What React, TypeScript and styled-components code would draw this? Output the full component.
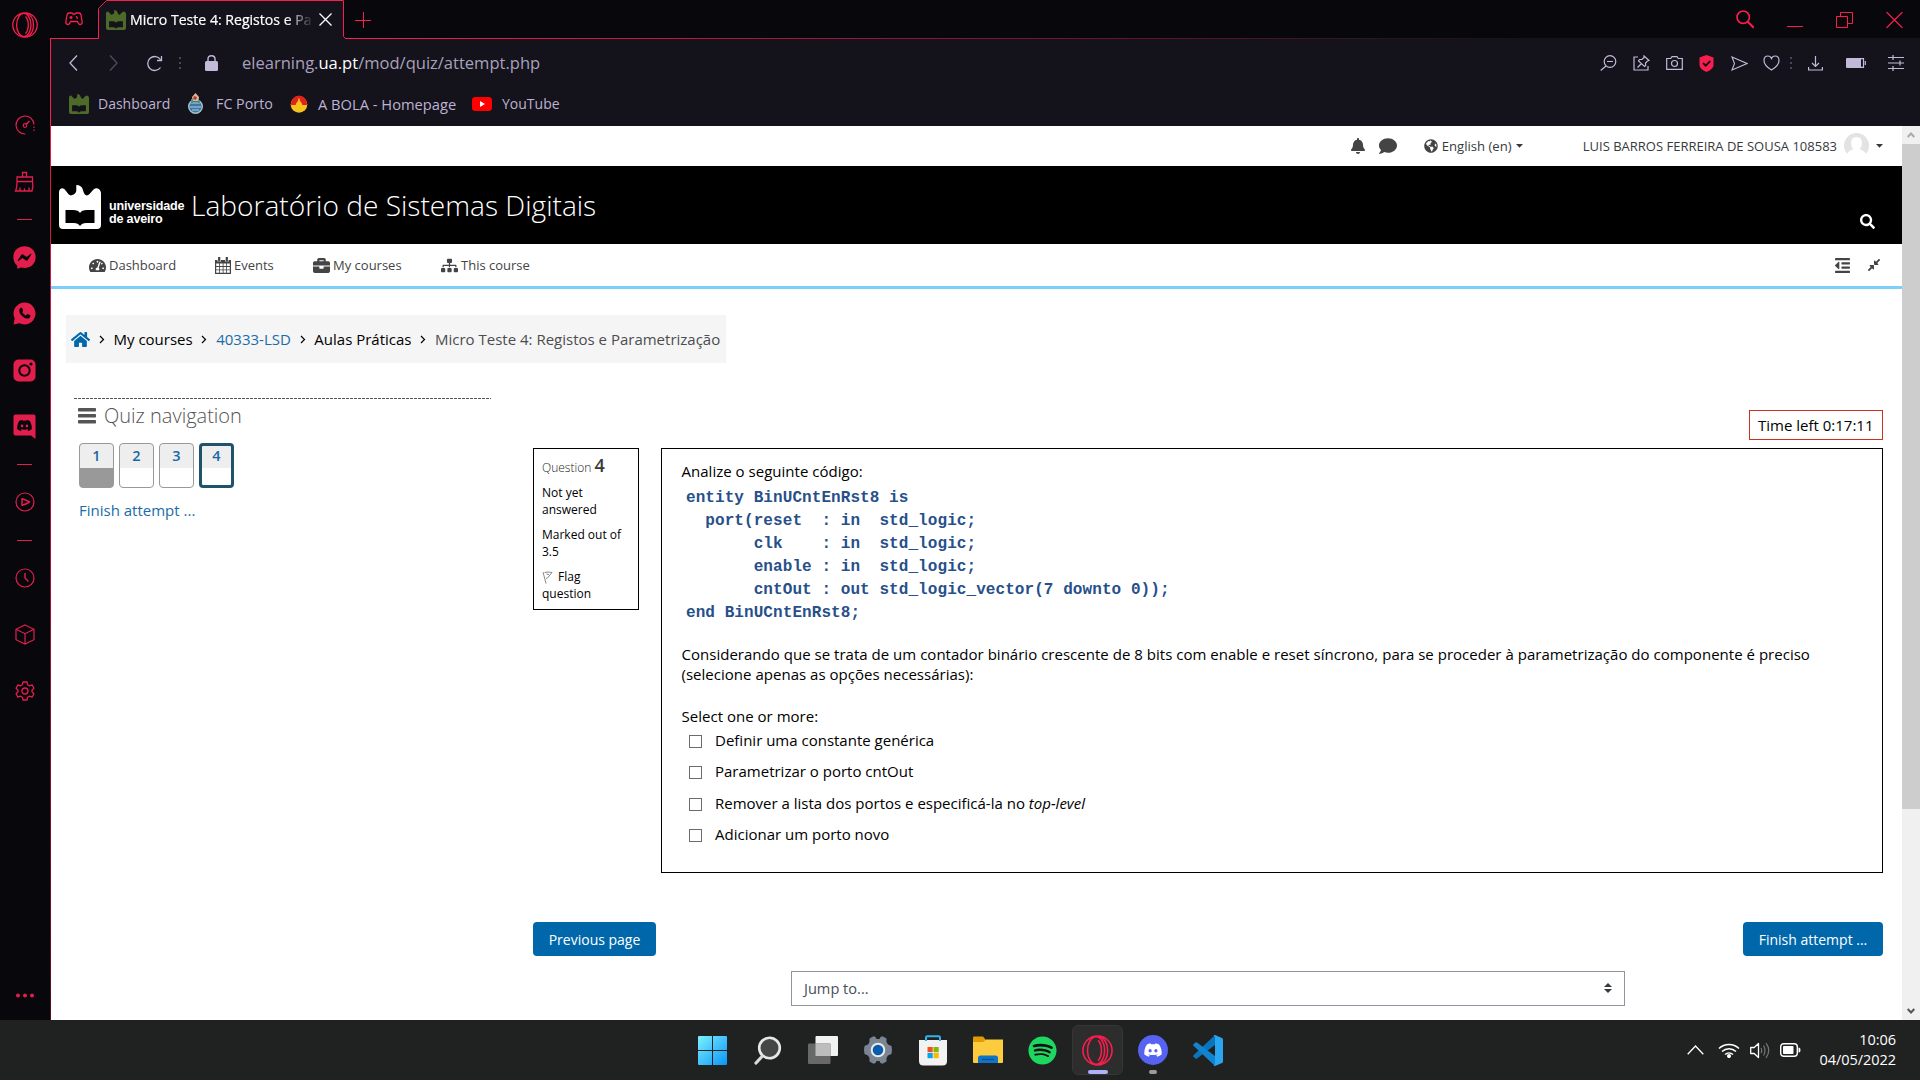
import React from 'react';
import styled, { createGlobalStyle } from 'styled-components';
import {
  FaBell, FaComment, FaGlobeAmericas, FaSearch, FaTachometerAlt, FaBriefcase, FaSitemap,
  FaOutdent, FaCompressAlt, FaHome, FaDiscord, FaSpotify, FaFacebookMessenger,
} from 'react-icons/fa';

const RED = '#fa1e4e';
const SIDE = '#e21e4c';
const LILAC = '#c3b9d8';

const Global = createGlobalStyle`
  * { box-sizing: border-box; }
  html, body { margin: 0; padding: 0; overflow: hidden; background: #fff; }
  body { font-family: "Open Sans", "Noto Sans", sans-serif; font-size: 15px; color: #000; }
  svg { display: block; flex: none; }
`;

const Screen = styled.div`
  width: 1920px; height: 1080px; display: flex; flex-direction: column; overflow: hidden;
`;
const Browser = styled.div`display: flex; height: 1020px; background: #08070c;`;

/* ---------- side bar ---------- */
const SideBar = styled.nav`
  width: 50px; height: 1020px; display: flex; flex-direction: column; align-items: center; background: #08070c; color: ${SIDE};
`;
const Slot = styled.div<{ $h: number }>`
  height: ${p => p.$h}px; width: 50px; flex: none; display: flex; align-items: center; justify-content: center; padding-right: 1px;
`;
const Dash = styled.i`width: 15px; height: 1px; background: ${SIDE};`;
const Grow = styled.div`flex: 1;`;

const Window = styled.div`width: 1870px; display: flex; flex-direction: column;`;

/* ---------- tab strip ---------- */
const TabStrip = styled.header`height: 39px; display: flex; align-items: flex-start; color: ${RED};`;
const TabLead = styled.div`
  width: 48px; height: 39px; display: flex; align-items: center; justify-content: center; border-bottom: 1px solid ${RED};
`;
const Tab = styled.div`
  position: relative; width: 247px; height: 39px; display: flex; align-items: center; padding: 0 13px 0 8px;
`;
const TabFrame = styled.svg`position: absolute; left: 0; top: 0;`;
const TabTitle = styled.div`
  position: relative; margin-left: 4px; width: 182px; height: 22px; overflow: hidden; white-space: nowrap;
  font-size: 14.1px; line-height: 22px; color: #fff;
  -webkit-text-stroke: 0.2px #fff;
  -webkit-mask-image: linear-gradient(90deg, #000 156px, transparent 184px);
  mask-image: linear-gradient(90deg, #000 156px, transparent 184px);
`;
const TabIcon = styled.div`position: relative;`;
const TabClose = styled.div`position: relative; margin-left: auto;`;
const TabRest = styled.div`
  flex: 1; height: 39px; display: flex; align-items: center; padding: 0 17px 0 10px;
  background: linear-gradient(90deg, ${RED}, #a31638 30%, #14121b 75%) 0 38px / 100% 1px no-repeat;
`;
const WindowControls = styled.div`margin-left: auto; display: flex; gap: 33px; align-items: center;`;

/* ---------- tool bar ---------- */
const ToolBar = styled.div`
  height: 48px; display: flex; align-items: center; background: #14121b; color: ${LILAC}; border-left: 1px solid ${RED};
`;
const Tool = styled.div<{ $w: number; $dim?: boolean }>`
  width: ${p => p.$w}px; display: flex; justify-content: center; opacity: ${p => (p.$dim ? 0.35 : 1)};
`;
const Address = styled.div`
  font-size: 16.55px; line-height: 24px; color: #a9a1bc; margin-left: 3px; flex: 1;
  b { font-weight: 400; color: #fff; }
`;
const Bookmarks = styled.div`
  height: 39px; display: flex; align-items: center; background: #14121b; border-left: 1px solid ${RED};
  padding: 0 0 6px 18px;
`;
const Bookmark = styled.div<{ $w: number; $gap: number; $size?: number }>`
  width: ${p => p.$w}px; display: flex; align-items: center; gap: ${p => p.$gap}px; white-space: nowrap;
  font-size: ${p => p.$size ?? 14}px; line-height: 20px; color: #bdb3d2;
`;

/* ---------- page ---------- */
const View = styled.div`
  height: 894px; display: flex;
  &::before { content: ''; width: 1px; background: linear-gradient(#e01c46, #8a1231 70%, #5c0d22); }
`;
const Page = styled.main`width: 1851px; background: #fff; display: flex; flex-direction: column;`;
const ScrollTrack = styled.div`
  width: 18px; background: #f0f0f0; display: flex; flex-direction: column; align-items: center;
`;
const ScrollArrow = styled.div`height: 18px; display: flex; align-items: center;`;
const ScrollThumb = styled.div`width: 18px; height: 665px; background: #cdcdcd;`;

const UserBar = styled.div`
  height: 40px; display: flex; align-items: center; justify-content: flex-end; padding: 0 19px 1px 0;
  font-size: 13px; line-height: 20px; color: #373a3c;
`;
const UserTools = styled.div`display: flex; align-items: center; gap: 13px; margin-right: 27px; color: #444;`;
const Lang = styled.div`display: flex; align-items: center; gap: 4px; margin-right: 59px; width: 100px; font-size: 13.1px;`;
const UserName = styled.div`display: flex; align-items: center; gap: 7px; white-space: nowrap;`;

const Banner = styled.div`
  height: 78px; background: #000; color: #fff; display: flex; padding-left: 8px;
`;
const LogoMark = styled.div`padding-top: 19px;`;
const LogoText = styled.div`
  margin: 34px 0 0 8px; width: 77px; font: 700 12.6px/13px "Liberation Sans", Arial, sans-serif; letter-spacing: -0.2px;
`;
const CourseTitle = styled.h1`
  margin: 20px 0 0 5px; font-weight: 300; font-size: 28.1px; line-height: 38px; white-space: nowrap;
`;
const BannerSearch = styled.div`margin: 48px 27px 0 auto;`;

const NavBar = styled.div`
  height: 45px; display: flex; align-items: center; padding: 0 21px 0 38px; border-bottom: 3px solid #7bcffd; color: #444;
  font-size: 13px;
`;
const NavItem = styled.div<{ $w: number }>`
  width: ${p => p.$w}px; display: flex; align-items: center; gap: 3px; white-space: nowrap; line-height: 20px;
`;
const NavTools = styled.div`margin-left: auto; display: flex; align-items: center; gap: 16px;`;

const Crumbs = styled.div`
  margin: 26px 0 0 15px; width: 660px; height: 48px; background: #f5f5f5; display: flex; align-items: center;
  padding: 0 0 0 5px; color: #000; white-space: nowrap;
`;
const Crumb = styled.span<{ $tone?: 'link' | 'muted' }>`
  color: ${p => (p.$tone === 'link' ? '#1a6ba8' : p.$tone === 'muted' ? '#4c4d4f' : '#000')};
`;
const Chevron = styled.span`
  width: 23.5px; display: flex; justify-content: center; padding-top: 1px;
`;

const Columns = styled.div`display: grid; grid-template-columns: 417px 1350px; column-gap: 42px; margin: 35px 0 0 23px;`;
const NavBlock = styled.aside`
  background: repeating-linear-gradient(90deg, #555 0 3px, #fff 3px 4px) 0 0 / 100% 1px no-repeat;
`;
const BlockTitle = styled.h2`
  margin: 5px 0 0 4px; height: 26px; display: flex; align-items: center; gap: 8px;
  font-weight: 300; font-size: 20px; line-height: 26px; color: #555;
`;
const Numbers = styled.div`display: flex; gap: 5px; margin: 14px 0 0 5px;`;
const NumberBtn = styled.div<{ $done?: boolean; $current?: boolean }>`
  width: 35px; height: 45px; overflow: hidden; border-radius: 4px; text-align: center;
  border: ${p => (p.$current ? '3px solid #1f536b' : '1px solid #999')};
  background: linear-gradient(#eee 0 0) top / 100% ${p => (p.$current ? 22 : 24)}px no-repeat ${p => (p.$done ? '#999' : '#fff')};
  color: #1668a6; font-weight: 600; font-size: 14.5px; line-height: 20px; padding-top: ${p => (p.$current ? 0 : 2)}px;
`;
const FinishLink = styled.a`display: block; margin: 12px 0 0 5px; line-height: 20px; color: #1a6ba8;`;

const Main = styled.section`padding-top: 12px;`;
const TimerRow = styled.div`display: flex; justify-content: flex-end;`;
const Timer = styled.div`
  width: 134px; height: 30px; border: 1px solid #ca3120; padding-left: 8px; line-height: 28px;
`;
const Question = styled.div`display: flex; gap: 22px; margin-top: 8px; align-items: flex-start;`;
const Info = styled.div`
  width: 106px; height: 162px; border: 1px solid #000; padding: 4px 0 0 8px; font-size: 12px; line-height: 17px; letter-spacing: 0;
`;
const InfoNo = styled.div`
  height: 23px; line-height: 24px; font-weight: 300; color: #222; white-space: nowrap;
  b { font-weight: 600; font-size: 18px; color: #373a3c; }
`;
const InfoPara = styled.div`margin-top: 8px; & + & { margin-top: 8px; }`;
const Flag = styled.div`
  margin-top: 8px; svg { display: inline-block; vertical-align: -3px; margin-right: 5px; }
`;
const Body = styled.div`width: 1222px; height: 425px; border: 1px solid #000; padding: 12px 20px 0;`;
const Para = styled.p<{ $top?: number }>`margin: ${p => p.$top ?? 0}px 0 0 -0.5px; line-height: 20px; letter-spacing: 0.02px;`;
const Code = styled.pre`
  margin: 6px 0 0 4px; font: 700 16px/23px "Liberation Mono", "Courier New", monospace; letter-spacing: 0.07px; color: #27508a;
`;
const Answers = styled.div`display: flex; flex-direction: column; padding-left: 7px; margin-top: 1px;`;
const Answer = styled.label`
  display: flex; align-items: center; height: 31.3px; gap: 13px; padding-bottom: 5px; line-height: 20px;
`;
const Box = styled.i`width: 13px; height: 13px; border: 1px solid #6b6b6b; background: #fff; margin-top: 3px;`;
const Actions = styled.div`display: flex; justify-content: space-between; margin-top: 49px;`;
const Button = styled.button<{ $w: number }>`
  width: ${p => p.$w}px; height: 34px; border: 0; border-radius: 4px; background: #0068aa; color: #fff; padding: 1px 0 0;
  font: 14px/20px "Open Sans", sans-serif;
`;
const Jump = styled.div`
  width: 834px; height: 35px; margin: 15px 0 0 258px; border: 1px solid #8f959e; display: flex; align-items: center;
  justify-content: space-between; padding: 0 12px 1px 12px; color: #495057; font-size: 14.6px;
`;

/* ---------- task bar ---------- */
const TaskBar = styled.footer`
  height: 60px; background: #202121; display: grid; grid-template-columns: 685px 550px 1fr; color: #fff;
`;
const Apps = styled.div`grid-column: 2; display: flex;`;
const Launcher = styled.div<{ $active?: boolean }>`
  position: relative; width: 51px; height: 50px; margin: 5px 2px; border-radius: 6px; display: flex; align-items: center; justify-content: center;
  background: ${p => (p.$active ? '#2d2d2d' : 'none')}; border: 1px solid ${p => (p.$active ? '#363636' : 'transparent')};
`;
const Running = styled.i<{ $wide?: boolean }>`
  position: absolute; bottom: 0; left: 50%; transform: translateX(-50%); border-radius: 2px; height: 4px;
  width: ${p => (p.$wide ? 20 : 8)}px; background: ${p => (p.$wide ? '#abb3f5' : '#9c9c9c')};
`;
const Tray = styled.div`display: flex; align-items: center; justify-content: flex-end; padding-right: 24px;`;
const TrayIcons = styled.div`display: flex; align-items: center; gap: 10px; margin-right: 19px;`;
const Clock = styled.div`text-align: right; font-size: 14.5px; line-height: 20px; padding-bottom: 1px; letter-spacing: -0.05px;`;

/* ---------- drawings ---------- */
const Castle = ({ w, h, color, hole }: { w: number; h: number; color: string; hole: string }) => (
  <svg width={w} height={h} viewBox="0 0 42 44" preserveAspectRatio="none">
    <path fill={color} d="M0 7Q.5 3.300 3.500 3.300Q5.500 3.300 7 6L9.500 9.300Q11 10.700 12.500 10.300Q17.500 9 17.300 5V0Q22.500 0 23.800 4.500Q25 9.500 27.200 10.300Q29 10.800 30.500 9L34.500 4.500Q36 3.200 37.700 3.200Q41.500 4 42 8V40Q42 44 38 44H4Q0 44 0 40Z" />
    <path fill={hole} d="M6.500 25H14Q19.500 25 21 28Q22.500 25 28 25H35.500V38H27Q23 38 21 41Q19 38 15 38H6.500Z" />
  </svg>
);
const line = { fill: 'none', stroke: 'currentColor' } as const;
const OperaGX = ({ s, color, sw = 1.3 }: { s: number; color: string; sw?: number }) => (
  <svg width={s} height={s} viewBox="0 0 26 26" fill="none" stroke={color} strokeWidth={sw}>
    <circle cx="13" cy="13" r="12.200" />
    <ellipse cx="11.800" cy="13" rx="7.200" ry="11.600" />
    <path d="M14.500 1Q21.500 4 21.500 13T14.500 25M13.500 4.500Q16.300 7.500 16.300 13T13.500 21.500" />
  </svg>
);
const Chev = () => (
  <svg width="6" height="9" viewBox="0 0 6 9" {...line} strokeWidth="1.200"><path d="M1 1l3.500 3.500L1 8" /></svg>
);
const Caret = () => (
  <svg width="7" height="4" viewBox="0 0 7 4" fill="#373a3c"><path d="M0 0h7L3.500 3.700z" /></svg>
);
const Dots = () => (
  <svg width="2" height="14" viewBox="0 0 2 14" fill="#4a4656"><path d="M0 1h2v2H0zM0 6h2v2H0zM0 11h2v2H0z" /></svg>
);

const answers: React.ReactNode[] = [
  'Definir uma constante genérica',
  'Parametrizar o porto cntOut',
  <span key="t">Remover a lista dos portos e especificá-la no <i>top-level</i></span>,
  'Adicionar um porto novo',
];

const code = `entity BinUCntEnRst8 is
  port(reset  : in  std_logic;
       clk    : in  std_logic;
       enable : in  std_logic;
       cntOut : out std_logic_vector(7 downto 0));
end BinUCntEnRst8;`;

const Side = () => (
  <SideBar>
    <Slot $h={50}><OperaGX s={26} color={RED} /></Slot>
    <Slot $h={46} />
    <Slot $h={57}>
      <svg width="20" height="20" viewBox="0 0 20 20" {...line} strokeWidth="1.200">
        <path d="M10.500 19A9 9 0 1 1 19 9.500" /><circle cx="10" cy="10.500" r="1.800" /><path d="M11.300 9.200L14.500 6" strokeWidth="1.600" />
        <path d="M19 11.500v5.500" strokeDasharray="1.500 1.500" />
      </svg>
    </Slot>
    <Slot $h={56}>
      <svg width="21" height="21" viewBox="0 0 21 21" {...line} strokeWidth="1.300">
        <path d="M3 6h15.500v4.500H3zM8.500 6V1.500h4V6M3 10.500Q3 17 1.500 20H18Q19.500 16 18.500 10.500M6 20v-3.500M10.500 20v-2.500M15 20v-3.500" />
      </svg>
    </Slot>
    <Slot $h={20}><Dash /></Slot>
    <Slot $h={56.5}><FaFacebookMessenger size={23} /></Slot>
    <Slot $h={56.5}>
      <svg width="23" height="23" viewBox="0 0 23 23">
        <path fill={SIDE} d="M11.500.5a11 11 0 1 1-5 20.800L.5 22.500 1.700 16.500A11 11 0 0 1 11.500.5Z" />
        <path fill="#08070c" d="M7.500 6c1-.6 1.600-.3 2 .8.600 1.600.8 1.800.2 2.600-.5.600-.6.700.3 1.900 1 1.200 1.700 1.700 2.700 2.100.7.300 1.200-1.200 1.800-1.300.6 0 2.300.9 2.800 1.200.5.500-.2 2.300-1.200 2.900-2 1-4.500 0-6.700-1.900C6.700 11.900 5 8 7.500 6Z" />
      </svg>
    </Slot>
    <Slot $h={56.5}>
      <svg width="23" height="23" viewBox="0 0 23 23">
        <rect x=".5" y=".5" width="22" height="22" rx="5" fill={SIDE} />
        <circle cx="11.500" cy="11.500" r="5.200" fill="none" stroke="#08070c" strokeWidth="2" /><circle cx="18" cy="5" r="1.600" fill="#08070c" />
      </svg>
    </Slot>
    <Slot $h={56.5}>
      <svg width="23" height="25" viewBox="0 0 23 25">
        <path fill={SIDE} d="M2.500.5h18q2 0 2 2V25L18 21.500H2.500q-2 0-2-2v-17q0-2 2-2Z" />
        <FaDiscord x="3.500" y="3.500" size={16} color="#08070c" />
      </svg>
    </Slot>
    <Slot $h={18}><Dash /></Slot>
    <Slot $h={57}>
      <svg width="20" height="20" viewBox="0 0 20 20" {...line} strokeWidth="1.200"><circle cx="10" cy="10" r="9" /><path strokeWidth="1.500" strokeLinejoin="round" d="M7 6.700v6.600q3.500-.7 7.500-3.300Q10.500 7.400 7 6.700Z" /></svg>
    </Slot>
    <Slot $h={20}><Dash /></Slot>
    <Slot $h={56.5}>
      <svg width="20" height="20" viewBox="0 0 20 20" {...line} strokeWidth="1.200"><circle cx="10" cy="10" r="9" /><path d="M10 5v5l3.500 3.500" strokeWidth="1.400" /></svg>
    </Slot>
    <Slot $h={56.5}>
      <svg width="20" height="21" viewBox="0 0 20 21" {...line} strokeWidth="1.200"><path d="M10 1l9 4.300v10.400L10 20l-9-4.300V5.300zM1 5.300l9 4.400 9-4.400M10 9.700V20" /></svg>
    </Slot>
    <Slot $h={56.5}>
      <svg width="20" height="20" viewBox="0 0 20 20" {...line} strokeWidth="1.300" strokeLinejoin="round">
        <path d="M8 1h4l.6 2.800 1.700 1L17.200 4l1.700 3.300L17 9.200v1.600l1.900 1.900-1.700 3.300-2.900-.8-1.700 1L12 19H8l-.6-2.800-1.700-1-2.900.8-1.700-3.300L3 10.800V9.200L1.100 7.300 2.800 4l2.900.8 1.700-1Z" /><circle cx="10" cy="10" r="3" />
      </svg>
    </Slot>
    <Grow />
    <Slot $h={50}><svg width="18" height="5" viewBox="0 0 18 5" fill={SIDE}><circle cx="2" cy="2.500" r="2" /><circle cx="9" cy="2.500" r="2" /><circle cx="16" cy="2.500" r="2" /></svg></Slot>
  </SideBar>
);

const Tabs = () => (
  <TabStrip>
    <TabLead>
      <svg width="18" height="14" viewBox="0 0 18 14" {...line} strokeWidth="1.300">
        <path strokeLinejoin="round" d="M4 1h3l1 1h2l1-1h3q1.500 0 2 2l1.200 7q0 2.500-2.200 2.500-1.500 0-2.500-3h-7q-1 3-2.500 3Q.8 12.500.8 10L2 3q.5-2 2-2Z" />
        <path d="M4.500 5.500h3M6 4v3" /><path d="M11.500 4v1.500M13 6h-1.500" />
      </svg>
    </TabLead>
    <Tab>
      <TabFrame width="247" height="39" viewBox="0 0 247 39">
        <path fill="#14121b" d="M.5 39V8.500L8.500.5H245.500V36L248 39Z" />
        <path fill="none" stroke={RED} d="M0 38.500h.5V8.500L8.500.5H245.500V36.500L247.500 38.500" />
      </TabFrame>
      <TabIcon><Castle w={20} h={20} color="#4e6a29" hole="#14121b" /></TabIcon>
      <TabTitle>Micro Teste 4: Registos e Pa</TabTitle>
      <TabClose><svg width="13" height="13" viewBox="0 0 13 13" fill="none" stroke="#fff" strokeWidth="1.300"><path d="M.5.5l12 12M12.500.5l-12 12" /></svg></TabClose>
    </Tab>
    <TabRest>
      <svg width="16" height="16" viewBox="0 0 16 16" {...line} strokeWidth="1"><path d="M8.500 0v16M0 8.500h16" /></svg>
      <WindowControls>
        <svg width="18" height="19" viewBox="0 0 18 19" {...line} strokeWidth="1.600"><circle cx="7.200" cy="7.200" r="6.200" /><path d="M11.700 11.700l6 6" strokeWidth="2" /></svg>
        <svg width="16" height="16" viewBox="0 0 16 16" {...line}><path d="M0 14.500h16" /></svg>
        <svg width="17" height="16" viewBox="0 0 17 16" {...line}><path d="M.5 4.500h11v11H.5zM4.500 4.500v-4h12v11h-5" /></svg>
        <svg width="17" height="16" viewBox="0 0 17 16" {...line} strokeWidth="1.200"><path d="M.5 0l16 16M16.500 0l-16 16" /></svg>
      </WindowControls>
    </TabRest>
  </TabStrip>
);

const Tools = () => (
  <ToolBar>
    <Tool $w={45}><svg width="9" height="16" viewBox="0 0 9 16" {...line} strokeWidth="1.300"><path d="M8 .5L1 8l7 7.500" /></svg></Tool>
    <Tool $w={35} $dim><svg width="9" height="16" viewBox="0 0 9 16" {...line} strokeWidth="1.300"><path d="M1 .5L8 8l-7 7.500" /></svg></Tool>
    <Tool $w={46}><svg width="17" height="17" viewBox="0 0 17 17" {...line} strokeWidth="1.300"><path d="M14.500 12.500a7 7 0 1 1 0-8M15.500 1v4.500H11" /></svg></Tool>
    <Tool $w={6}><Dots /></Tool>
    <Tool $w={56}><svg width="13" height="16" viewBox="0 0 13 16"><rect x="0" y="6" width="13" height="10" rx="1.500" fill={LILAC} /><path d="M3 7V4q0-3.300 3.500-3.300T10 4v3" {...line} strokeWidth="1.400" /></svg></Tool>
    <Address><span>elearning.</span><b>ua.pt</b><span>/mod/quiz/attempt.php</span></Address>
    <Tool $w={33}><svg width="17" height="16" viewBox="0 0 17 16" {...line} strokeWidth="1.200"><circle cx="10" cy="6.500" r="5.800" /><path d="M6 11L.7 15.500M7 6.500h6" /></svg></Tool>
    <Tool $w={33}><svg width="17" height="16" viewBox="0 0 17 16" {...line} strokeWidth="1.200"><path d="M5 2H1v13h14v-4M11 1l5 4.500-1.500.5-2 2 .2 2.500-1.200 1L5.500 6l1-1.500L9 4.500 11 2.500zM8.500 8.500L4.500 12.500" /></svg></Tool>
    <Tool $w={32}><svg width="17" height="14" viewBox="0 0 17 14" {...line} strokeWidth="1.200"><path d="M.7 2.500h4L6 .7h5l1.300 1.800h4v10.800H.7z" /><circle cx="8.500" cy="7.500" r="3" /></svg></Tool>
    <Tool $w={33}><svg width="15" height="17" viewBox="0 0 15 17"><path fill={RED} d="M7.500 0l7 2.500V10q0 4-7 7-7-3-7-7V2.500z" /><path d="M4 8l2.700 2.700L11.300 6" fill="none" stroke="#14121b" strokeWidth="1.800" /></svg></Tool>
    <Tool $w={32}><svg width="17" height="15" viewBox="0 0 17 15" {...line} strokeWidth="1.100"><path d="M1 1l15 6.500L1 14l2.500-6.500z" /></svg></Tool>
    <Tool $w={32}><svg width="17" height="16" viewBox="0 0 17 16" {...line} strokeWidth="1.200"><path d="M8.500 15Q1 10.500 1 5.500 1 1 5 1q2.500 0 3.500 2.500Q9.500 1 12 1q4 0 4 4.500 0 5-7.500 9.500Z" /></svg></Tool>
    <Tool $w={8}><Dots /></Tool>
    <Tool $w={40}><svg width="15" height="15" viewBox="0 0 15 15" {...line} strokeWidth="1.200"><path d="M7.500 0v10.500M4 7l3.500 3.500L11 7M.6 11v3h13.800v-3" /></svg></Tool>
    <Tool $w={41}><svg width="20" height="10" viewBox="0 0 20 10"><rect width="15" height="10" rx="1" fill={LILAC} /><path d="M14 .6h3.500v8.800H14M19.300 3v4" {...line} strokeWidth="1.200" /></svg></Tool>
    <Tool $w={40}><svg width="16" height="16" viewBox="0 0 16 16" {...line} strokeWidth="1.200"><path d="M0 2.500h16M0 8h16M0 13.500h16M5 0v5M12 5.500v5M5 11v5" /></svg></Tool>
    <Tool $w={4} />
  </ToolBar>
);

const BookmarkBar = () => (
  <Bookmarks>
    <Bookmark $w={118} $gap={9}><Castle w={20} h={20} color="#4e6a29" hole="#14121b" />Dashboard</Bookmark>
    <Bookmark $w={103} $gap={12} $size={14.3}>
      <svg width="17" height="21" viewBox="0 0 17 21"><circle cx="8.500" cy="13.500" r="6.800" fill="#3b78a8" stroke="#a8c4cf" strokeWidth="1.400" /><path d="M4 10h9M3 14h11M5 17h7" stroke="#b8ccd4" /><path d="M5 4l3.500-4L12 4l-.5 4h-6z" fill="#d8b9a0" /><path d="M7 3l3 1-1 3-3-1z" fill="#b93a35" /><path d="M4 6h2v4H4zM11 7h2v3h-2z" fill="#4c9a5d" /></svg>
      FC Porto
    </Bookmark>
    <Bookmark $w={182} $gap={10} $size={14.7}>
      <svg width="18" height="18" viewBox="0 0 18 18"><circle cx="9" cy="9.500" r="8.300" fill="#f6c21c" /><path d="M.5 10Q2 1 9 .5 16 1 17.500 10H12.500L9 4 5.500 10z" fill="#e3211c" /><path d="M9 3.500v7M6.500 8.500h5" stroke="#f6c21c" strokeWidth="1.300" /></svg>
      A BOLA - Homepage
    </Bookmark>
    <Bookmark $w={100} $gap={10}>
      <svg width="20" height="14" viewBox="0 0 20 14"><rect width="20" height="14" rx="3.200" fill="#f00" /><path d="M8 4l5 3-5 3z" fill="#fff" /></svg>
      YouTube
    </Bookmark>
  </Bookmarks>
);

const Content = () => (
  <Page>
    <UserBar>
      <UserTools><FaBell size={16} /><FaComment size={18} /></UserTools>
      <Lang><FaGlobeAmericas size={14} color="#444" /><span>English (en)</span><Caret /></Lang>
      <UserName>
        <span>LUIS BARROS FERREIRA DE SOUSA 108583</span>
        <svg width="25" height="25" viewBox="0 0 25 25"><circle cx="12.500" cy="12.500" r="12.500" fill="#e3e3e3" /><path fill="#fff" d="M12.500 4q5.500 0 5.500 6 0 4-2.500 6Q20.500 17.500 22 21v4H3v-4q1.500-3.500 6.500-5Q7 14 7 10q0-6 5.500-6Z" /></svg>
        <Caret />
      </UserName>
    </UserBar>
    <Banner>
      <LogoMark><Castle w={42} h={44} color="#fff" hole="#000" /></LogoMark>
      <LogoText>universidade<br />de aveiro</LogoText>
      <CourseTitle>Laboratório de Sistemas Digitais</CourseTitle>
      <BannerSearch><FaSearch size={15} /></BannerSearch>
    </Banner>
    <NavBar>
      <NavItem $w={126}><FaTachometerAlt size={17} />Dashboard</NavItem>
      <NavItem $w={98}>
        <svg width="16" height="17" viewBox="0 0 16 17"><path fill="#444" d="M0 3h16v14H0z" /><path fill="#fff" d="M1.200 6.500h3v2.500h-3zM5 6.500h2.700v2.500H5zM8.500 6.500h2.700v2.500H8.500zM12 6.500h2.800v2.500H12zM1.200 9.900h3v2.500h-3zM5 9.900h2.700v2.500H5zM8.500 9.900h2.700v2.500H8.500zM12 9.900h2.800v2.500H12zM1.200 13.300h3v2.400h-3zM5 13.300h2.700v2.400H5zM8.500 13.300h2.700v2.400H8.500zM12 13.300h2.800v2.400H12z" /><path stroke="#fff" strokeWidth="3.600" d="M4.200 0v4.500M11.800 0v4.500" /><path stroke="#444" strokeWidth="2.200" d="M4.200 0v4.500M11.800 0v4.500" /></svg>
        Events
      </NavItem>
      <NavItem $w={128}><FaBriefcase size={17} />My courses</NavItem>
      <NavItem $w={120}><FaSitemap size={17} />This course</NavItem>
      <NavTools><FaOutdent size={17} /><FaCompressAlt size={14} /></NavTools>
    </NavBar>
    <Crumbs>
      <FaHome size={19} color="#0068aa" />
      <Chevron><Chev /></Chevron><Crumb>My courses</Crumb>
      <Chevron><Chev /></Chevron><Crumb $tone="link">40333-LSD</Crumb>
      <Chevron><Chev /></Chevron><Crumb>Aulas Práticas</Crumb>
      <Chevron><Chev /></Chevron><Crumb $tone="muted">Micro Teste 4: Registos e Parametrização</Crumb>
    </Crumbs>
    <Columns>
      <NavBlock>
        <BlockTitle>
          <svg width="18" height="16" viewBox="0 0 18 16" fill="#555"><rect width="18" height="3.500" rx=".8" /><rect y="6" width="18" height="3.500" rx=".8" /><rect y="12" width="18" height="3.500" rx=".8" /></svg>
          Quiz navigation
        </BlockTitle>
        <Numbers>
          <NumberBtn $done>1</NumberBtn><NumberBtn>2</NumberBtn><NumberBtn>3</NumberBtn><NumberBtn $current>4</NumberBtn>
        </Numbers>
        <FinishLink>Finish attempt ...</FinishLink>
      </NavBlock>
      <Main>
        <TimerRow><Timer>Time left 0:17:11</Timer></TimerRow>
        <Question>
          <Info>
            <InfoNo>Question <b>4</b></InfoNo>
            <InfoPara>Not yet<br />answered</InfoPara>
            <InfoPara>Marked out of<br />3.5</InfoPara>
            <Flag>
              <svg width="11" height="13" viewBox="0 0 11 13" fill="none" stroke="#888"><path d="M1 1l3 11.500M2.500 1.500Q6 .5 10 1.500L5 7.500 4 7M4.500 3l2.500.5" /></svg>
              Flag<br />question
            </Flag>
          </Info>
          <Body>
            <Para>Analize o seguinte código:</Para>
            <Code>{code}</Code>
            <Para $top={19}>Considerando que se trata de um contador binário crescente de 8 bits com enable e reset síncrono, para se proceder à parametrização do componente é preciso<br />(selecione apenas as opções necessárias):</Para>
            <Para $top={22}>Select one or more:</Para>
            <Answers>{answers.map((a, i) => <Answer key={i}><Box />{a}</Answer>)}</Answers>
          </Body>
        </Question>
        <Actions><Button $w={123}>Previous page</Button><Button $w={140}>Finish attempt ...</Button></Actions>
        <Jump>
          <span>Jump to...</span>
          <svg width="8" height="10" viewBox="0 0 8 10" fill="#343a40"><path d="M4 0l4 4H0zM4 10l4-4H0z" /></svg>
        </Jump>
      </Main>
    </Columns>
  </Page>
);

const Tasks = () => (
  <TaskBar>
    <Apps>
      <Launcher>
        <svg width="29" height="29" viewBox="0 0 29 29"><defs><linearGradient id="win" gradientUnits="userSpaceOnUse" x1="0" y1="0" x2="29" y2="29"><stop offset="0" stopColor="#7df0fd" /><stop offset="1" stopColor="#0a95f7" /></linearGradient></defs><path fill="url(#win)" d="M1 0h13v14H0V1q0-1 1-1ZM15 0h13q1 0 1 1v13H15zM0 15h14v14H1q-1 0-1-1zM15 15h14v13q0 1-1 1H15z" /></svg>
      </Launcher>
      <Launcher>
        <svg width="28" height="29" viewBox="0 0 28 29"><circle cx="15.500" cy="12" r="10.300" fill="#454646" stroke="#e8e8e8" strokeWidth="2.600" /><path d="M8 20.500L2 27" stroke="#d8dadb" strokeWidth="3.200" strokeLinecap="round" /></svg>
      </Launcher>
      <Launcher>
        <svg width="30" height="28" viewBox="0 0 30 28"><rect x="7.500" width="22.500" height="20" rx="1" fill="#f1f1f1" /><rect y="7.500" width="22.500" height="20.500" rx="1" fill="#686868" /><path fill="#bdbdbd" d="M7.500 7.500h15v12.500h-15z" /></svg>
      </Launcher>
      <Launcher>
        <svg width="30" height="30" viewBox="0 0 30 30"><path fill="#7b8591" d="M10.500 1.200l2 .8 1 2h3l1-2 2-.8 4 2.300 0 3.500 1.500 2.500 3.500 1.500.5 4-.5 4-3.500 1.500-1.500 2.500 0 3.500-4 2.300-2-.8-1-2h-3l-1 2-2 .8-4-2.300 0-3.500L5 20.500 1.500 19 1 15l.5-4L5 9.500 6.500 7l0-3.500z" /><circle cx="15" cy="15" r="6.300" fill="#0a5cad" stroke="#ebebeb" strokeWidth="2" /></svg>
      </Launcher>
      <Launcher>
        <svg width="30" height="31" viewBox="0 0 30 31"><path d="M8 7V2.500Q8 1.200 9.300 1.200H20.700Q22 1.200 22 2.500V7" fill="none" stroke="#2fb4ee" strokeWidth="2" /><path fill="#f2f2f2" d="M1 5h28v21q0 4.500-4.500 4.500h-19Q1 30.500 1 26z" /><path d="M8 6V4.500M22 6V4.500" stroke="#2fb4ee" strokeWidth="2" /><path fill="#f25022" d="M9.500 12h5.200v5.200H9.500z" /><path fill="#7fba00" d="M15.500 12h5.200v5.200h-5.200z" /><path fill="#00a4ef" d="M9.500 18h5.200v5.200H9.500z" /><path fill="#ffb900" d="M15.500 18h5.200v5.200h-5.200z" /></svg>
      </Launcher>
      <Launcher>
        <svg width="30" height="28" viewBox="0 0 30 28"><path fill="#e19c05" d="M0 1.500Q0 .5 1 .5h9l2.500 3V8H0z" /><path fill="#fdcb3e" d="M0 6h10l3-2.500h17V26q0 1-1 1H1q-1 0-1-1z" /><path fill="#0f75c6" d="M5 27v-5q0-2.500 2.500-2.500h15Q25 19.500 25 22v5z" /><path d="M9 23.500h12" stroke="#0a4f91" strokeWidth="1.200" /></svg>
      </Launcher>
      <Launcher><svg width="29" height="29" viewBox="0 0 29 29"><circle cx="14.500" cy="14.500" r="13" fill="#111" /><FaSpotify size={29} color="#1ed760" /></svg></Launcher>
      <Launcher $active><OperaGX s={31} color={RED} sw={1.3} /><Running $wide /></Launcher>
      <Launcher><svg width="30" height="30" viewBox="0 0 30 30"><circle cx="15" cy="15" r="15" fill="#5662f0" /><FaDiscord x="5.500" y="5.500" size={19} color="#fff" /></svg><Running /></Launcher>
      <Launcher>
        <svg width="30" height="31" viewBox="0 0 30 31"><path fill="#0a74bd" d="M22 0v10L4 23.500q-1 .5-1.700 0L.5 21.800q-.7-.8 0-1.600z" /><path fill="#1283cf" d="M.5 10.800q-.7-.8 0-1.600L2.300 7.500q.7-.5 1.700 0L22 21v10z" /><path fill="#2aa6f0" d="M22 0l7 3q1 .5 1 1.500v22q0 1-1 1.500l-7 3q-1 0-1.500-1 1.500.5 1.500-1.500V2.500Q22 .5 20.500 1 21 0 22 0Z" /></svg>
      </Launcher>
    </Apps>
    <Tray>
      <TrayIcons>
        <svg width="17" height="10" viewBox="0 0 17 10" {...line} strokeWidth="1.300"><path d="M.7 9.300L8.500 1l7.800 8.300" /></svg>
        <svg width="26" height="15" viewBox="-5 0 26 15" {...line} strokeWidth="1.500"><path d="M0 5.500a14.500 14.500 0 0 1 20 0M3 8.500a10 10 0 0 1 14 0M6 11.500a6 6 0 0 1 8 0" /><circle cx="10" cy="13" r="1.300" fill="#fff" /></svg>
        <svg width="20" height="17" viewBox="0 0 20 17" {...line} strokeWidth="1.300"><path d="M.7 5.500h3.500L8.500 1.500v14L4.200 11.500H.7z" strokeLinejoin="round" /><path d="M11 6q1.500 2.500 0 5M13.500 3.500q3 5 0 10M16 1.200q5.500 7.300 0 14.600" stroke="#777" strokeWidth="1.200" /></svg>
        <svg width="21" height="14" viewBox="0 0 21 14"><rect x=".7" y=".7" width="16.600" height="12.600" rx="3" fill="none" stroke="#fff" strokeWidth="1.400" /><rect x="3" y="3" width="10.500" height="8" rx=".8" fill="#fff" /><path d="M18.500 4.500h.5q1.500 0 1.500 2.500T19 9.500h-.5z" fill="#fff" /></svg>
      </TrayIcons>
      <Clock>10:06<br />04/05/2022</Clock>
    </Tray>
  </TaskBar>
);

export default function App() {
  return (
    <>
      <Global />
      <Screen>
        <Browser>
          <Side />
          <Window>
            <Tabs />
            <Tools />
            <BookmarkBar />
            <View>
              <Content />
              <ScrollTrack>
                <ScrollArrow><svg width="8" height="6" viewBox="0 0 8 6" fill="none" stroke="#aaa" strokeWidth="2"><path d="M.7 5L4 1.500 7.300 5" /></svg></ScrollArrow>
                <ScrollThumb />
                <Grow />
                <ScrollArrow><svg width="8" height="6" viewBox="0 0 8 6" fill="none" stroke="#555" strokeWidth="2"><path d="M.7 1L4 4.500 7.300 1" /></svg></ScrollArrow>
              </ScrollTrack>
            </View>
          </Window>
        </Browser>
        <Tasks />
      </Screen>
    </>
  );
}
